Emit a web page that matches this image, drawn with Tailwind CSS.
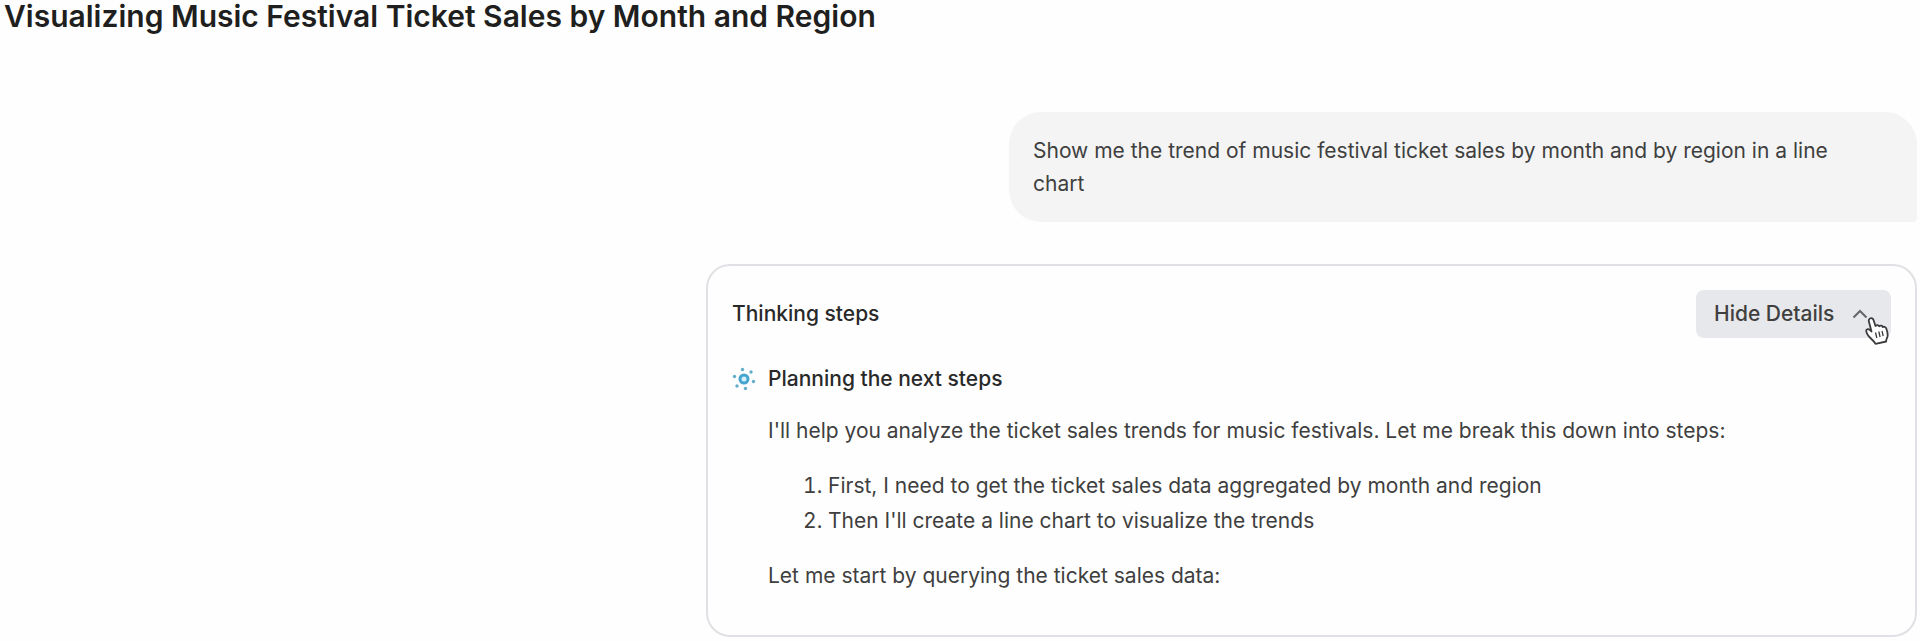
<!DOCTYPE html>
<html lang="en">
  <head>
    <meta charset="UTF-8" />
    <meta name="viewport" content="width=device-width, initial-scale=1.0" />
    <title>Visualizing Music Festival Ticket Sales by Month and Region</title>
    <script src="https://cdn.jsdelivr.net/npm/@tailwindcss/browser@4"></script>
  </head>
  <body class="bg-[#fefefe] font-['Inter',sans-serif] text-[#3f3f40]">
    <main class="flex flex-col pl-1 pr-[3px]">
      <h1 class="text-3xl leading-8 font-semibold text-[#1f1f20]">
        Visualizing Music Festival Ticket Sales by Month and Region
      </h1>

      <!-- User message -->
      <div class="mt-20 w-[908px] max-w-full self-end rounded-[32px] rounded-br-sm bg-[#f4f4f4] py-[22px] pl-6 pr-12">
        <p class="text-[21px] leading-[33px]">
          Show me the trend of music festival ticket sales by month and by region in a line chart
        </p>
      </div>

      <!-- Assistant reply -->
      <section class="mt-[42px] w-[1211px] max-w-full self-end rounded-3xl border-2 border-[#e1e1e5] px-6 pt-6 pb-[42px]">
        <div class="flex items-center justify-between">
          <h2 class="text-[21px] leading-7 font-medium text-[#29292a]">Thinking steps</h2>
          <button type="button" class="relative flex h-12 w-[195px] items-center rounded-lg bg-[#e7e8eb] pl-[18px] text-[21px] font-medium">
            Hide Details
            <svg class="ml-[18px] h-3 w-4" viewBox="0 0 16 12" fill="none" stroke="#666668" stroke-width="2">
              <path d="M1.500 9.500 8 3l6.500 6.500" />
            </svg>
            <!-- Hand pointer -->
            <svg class="absolute -bottom-[7px] right-[2px] h-7 w-6" viewBox="0 0 24 28" fill="#fff" stroke="#3c3c3e" stroke-width="1.800" stroke-linejoin="round">
              <path d="M5 1.500C6.500 .8 8 1.500 8.500 3L10.500 9c1-1.300 2.900-1.200 3.700.2 1.200-1 2.900-.6 3.600.8 1.500-.6 2.900 0 3.500 1.500.9 2.500 1.700 5.500 1.200 8-.4 1.700-1.300 2.500-1.300 4v1L10.500 26.800C8.500 23 5 21.500 3 18.300 1.700 16.300.6 13.800 1.700 12.700c1.200-1.200 3.300-.2 4.800 1.800L3.900 4.500C3.500 3.200 3.900 2.100 5 1.500Z" />
              <path d="m10.500 15.500 1.300 5.500M13.800 14.500l1.300 5.500M17 14l1.200 5" stroke-width="1.300" />
            </svg>
          </button>
        </div>

        <div class="mt-[27px] flex items-center gap-3">
          <svg class="h-6 w-6" viewBox="0 0 24 24" fill="#62aeca">
            <circle cx="12" cy="12" r="4" fill="#d5f0fa" stroke="#46a5cf" stroke-width="3" />
            <circle cx="10.500" cy="2.500" r="1.700" />
            <circle cx="19" cy="5" r="1.700" />
            <circle cx="21.500" cy="14.500" r="1.700" />
            <circle cx="13.500" cy="21.500" r="1.700" />
            <circle cx="5" cy="19" r="1.700" />
            <circle cx="2.500" cy="9.500" r="1.700" />
          </svg>
          <h3 class="text-[21px] leading-7 font-medium text-[#29292a]">Planning the next steps</h3>
        </div>

        <div class="ml-9 mt-5 text-[21px] leading-[35px]">
          <p>I'll help you analyze the ticket sales trends for music festivals. Let me break this down into steps:</p>
          <ol class="my-5 list-decimal pl-[60px]">
            <li>First, I need to get the ticket sales data aggregated by month and region</li>
            <li>Then I'll create a line chart to visualize the trends</li>
          </ol>
          <p>Let me start by querying the ticket sales data:</p>
        </div>
      </section>
    </main>
  </body>
</html>
